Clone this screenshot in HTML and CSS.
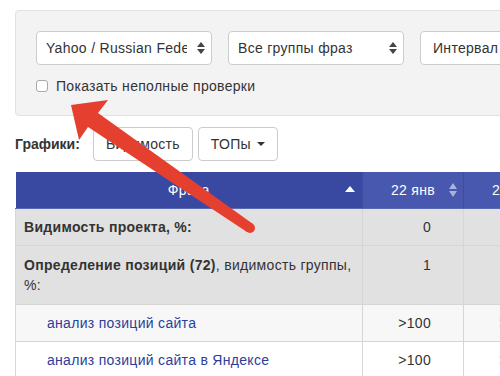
FILE: index.html
```html
<!DOCTYPE html>
<html lang="ru">
<head>
  <meta charset="UTF-8" />
  <title>Позиции</title>
  <link rel="stylesheet" href="styles.css">
</head>
<body>
  <div class="filters">
    <div class="filter-row">
      <div class="select">
        <span class="select-text">Yahoo / Russian Federation</span>
        <svg class="updown" width="8" height="12" viewBox="0 0 8 12"><polygon points="0,5 4,0 8,5"/><polygon points="0,7 4,12 8,7"/></svg>
      </div>
      <div class="select">
        <span class="select-text">Все группы фраз</span>
        <svg class="updown" width="8" height="12" viewBox="0 0 8 12"><polygon points="0,5 4,0 8,5"/><polygon points="0,7 4,12 8,7"/></svg>
      </div>
      <div class="btn btn-wide">Интервал <span class="caret"></span></div>
    </div>
    <label class="check"><span class="box"></span>Показать неполные проверки</label>
  </div>

  <div class="charts">
    <b class="charts-label">Графики:</b>
    <button class="btn">Видимость</button>
    <button class="btn">ТОПы <span class="caret"></span></button>
  </div>

  <table class="positions">
    <colgroup>
      <col class="col-phrase"><col class="col-date"><col class="col-date"><col class="col-date">
    </colgroup>
    <thead>
      <tr>
        <th class="sorted">Фраза <span class="sort-up"></span></th>
        <th>22 янв <svg class="sort-both" width="8" height="14" viewBox="0 0 8 14"><polygon points="0,6 4,0 8,6"/><polygon points="0,8 4,14 8,8"/></svg></th>
        <th>23 янв <svg class="sort-both" width="8" height="14" viewBox="0 0 8 14"><polygon points="0,6 4,0 8,6"/><polygon points="0,8 4,14 8,8"/></svg></th>
        <th>24 янв</th>
      </tr>
    </thead>
    <tbody>
      <tr class="summary">
        <td><b>Видимость проекта, %:</b></td>
        <td class="num">0</td><td class="num">0</td><td class="num">0</td>
      </tr>
      <tr class="summary">
        <td><b>Определение позиций (72)</b>, видимость группы, %:</td>
        <td class="num">1</td><td class="num">1</td><td class="num">1</td>
      </tr>
      <tr class="odd">
        <td class="phrase"><a href="#">анализ позиций сайта</a></td>
        <td class="num">&gt;100</td><td class="num">&gt;100</td><td class="num">&gt;100</td>
      </tr>
      <tr>
        <td class="phrase"><a href="#">анализ позиций сайта в Яндексе</a></td>
        <td class="num">&gt;100</td><td class="num">&gt;100</td><td class="num">&gt;100</td>
      </tr>
    </tbody>
  </table>

  <!-- annotation arrow drawn over the page -->
  <svg class="arrow" width="500" height="376" viewBox="0 0 500 376">
    <polygon points="71,105 108,100 98,113 253,224 247,232 88,127 79,140"/>
    <circle cx="250" cy="228" r="5"/>
  </svg>
</body>
</html>
```

FILE: styles.css
```css
html {
  overflow: hidden;
}

body {
  margin: 0;
  padding: 10px 0 0 15px;
  width: 760px;
  font-family: "Liberation Sans", Arial, sans-serif;
  font-size: 14px;
  line-height: 20px;
  letter-spacing: 0.3px;
  color: #333;
  background: #fff;
}

.filters {
  background-color: #f3f3f3;
  border: 1px solid #e1e1e1;
  border-radius: 4px;
  padding: 20px 20px 19px;
  display: flex;
  flex-direction: column;
  gap: 11px;
}

.filter-row {
  display: flex;
  gap: 16px;
}

.select {
  width: 176px;
  height: 34px;
  box-sizing: border-box;
  display: flex;
  align-items: center;
  padding: 0 6px 0 9px;
  background: #fff;
  border: 1px solid #ccc;
  border-radius: 4px;
}

.select-text {
  flex: 1;
  overflow: hidden;
  white-space: nowrap;
}

.updown {
  fill: #444;
  margin-left: 10px;
}

.btn {
  height: 34px;
  box-sizing: border-box;
  display: inline-flex;
  align-items: center;
  gap: 6px;
  padding: 0 12px;
  background: #fff;
  border: 1px solid #ccc;
  border-radius: 4px;
  font: inherit;
  letter-spacing: inherit;
  color: #333;
}

.btn-wide {
  width: 140px;
}

.caret {
  width: 0;
  height: 0;
  border-left: 4px solid transparent;
  border-right: 4px solid transparent;
  border-top: 4px solid #333;
}

.check {
  display: flex;
  align-items: center;
  gap: 8px;
}

.box {
  width: 12px;
  height: 12px;
  box-sizing: border-box;
  background: #fff;
  border: 1px solid #a9a9a9;
  border-radius: 3px;
}

.charts {
  display: flex;
  align-items: center;
  gap: 5px;
  margin: 11px 0 11px;
}

.charts-label {
  margin-right: 8px;
  letter-spacing: 0;
}

.positions {
  border-collapse: collapse;
  table-layout: fixed;
  width: 650px;
}

.col-phrase {
  width: 347px;
}

.col-date {
  width: 101px;
}

.positions th {
  position: relative;
  height: 36px;
  padding: 0 8px;
  background-color: #4758ae;
  color: #fff;
  font-weight: normal;
  text-align: center;
  border-left: 1px solid #3d4d9f;
  border-bottom: 1px solid #5869b6;
}

.positions th.sorted {
  background-color: #3949a1;
  border-left: none;
}

.sort-up {
  position: absolute;
  right: 7px;
  top: 14px;
  border-left: 5px solid transparent;
  border-right: 5px solid transparent;
  border-bottom: 6px solid #fff;
}

.sort-both {
  position: absolute;
  right: 6px;
  top: 11px;
  fill: #a9b2d8;
}

.positions td {
  padding: 8px 8px;
  border-top: 1px solid #d6d6d6;
  border-left: 1px solid #d6d6d6;
  vertical-align: top;
}

.positions td.num {
  text-align: right;
  padding-right: 32px;
}

.summary td {
  background-color: #e1e1e1;
}

.summary + .summary td {
  padding-top: 9px;
  padding-bottom: 9px;
}

.odd td {
  background-color: #f7f7f7;
}

.phrase {
  padding-left: 31px !important;
}

.phrase a {
  color: #2a3e9c;
  text-decoration: none;
}

.arrow {
  position: absolute;
  left: 0;
  top: 0;
  pointer-events: none;
  fill: #e5402f;
}
```
